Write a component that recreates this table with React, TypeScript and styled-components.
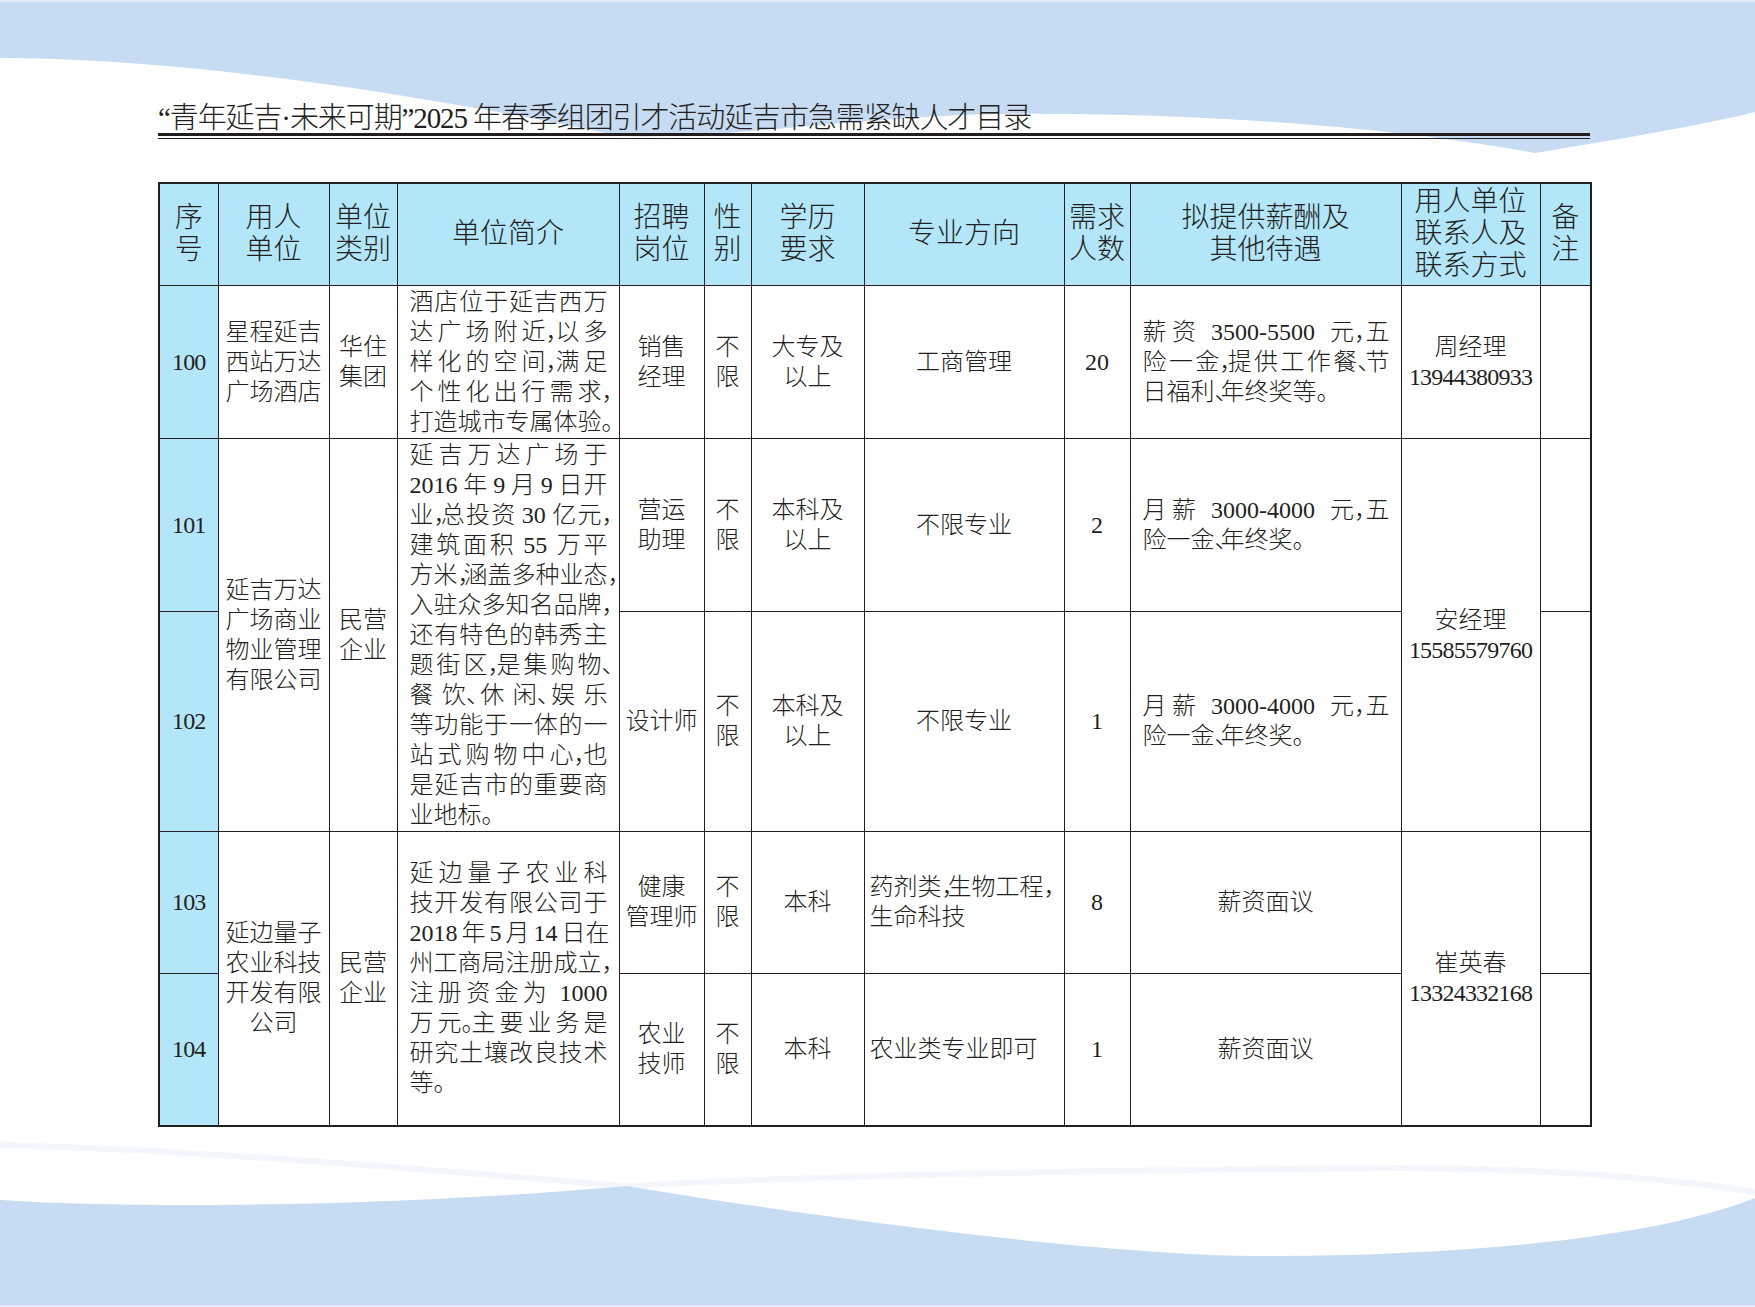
import React from "react";
import styled, { createGlobalStyle } from "styled-components";

const INK = "#231f20";
const SKY = "#c7dcf2";
const HEAD_BG = "#b4e6fa";

const GlobalStyle = createGlobalStyle`
  html, body { margin: 0; padding: 0; background: #fff; }
  body {
    font-family: "Liberation Serif", "Noto Sans CJK SC", serif;
    color: ${INK};
  }
`;

const Page = styled.div`
  position: relative;
  width: 1755px;
  height: 1307px;
  overflow: hidden;
  background: #fff;
`;

const Backdrop = styled.svg`
  position: absolute;
  left: 0;
  top: 0;
  width: 1755px;
  height: 1307px;
  z-index: 0;
`;

const Sheet = styled.main`
  position: relative;
  z-index: 1;
  padding: 104px 165px 0 158px;
`;

const Title = styled.h1`
  margin: 0;
  height: 29px;
  font-family: "Liberation Serif", "Noto Sans CJK SC", serif;
  font-weight: 300;
  font-size: 29px;
  line-height: 29px;
  letter-spacing: -1.1px;
  white-space: nowrap;
  border-bottom: 3px solid ${INK};
`;

const ThinRule = styled.div`
  margin-top: 2px;
  height: 1px;
  background: ${INK};
`;

const Table = styled.table`
  margin-top: 43px;
  width: 1432px;
  table-layout: fixed;
  border-collapse: collapse;
  border: 2px solid ${INK};
`;

const Col = styled.col<{ $w: number }>`
  width: ${(p) => p.$w}px;
`;

const Row = styled.tr<{ $h: number }>`
  height: ${(p) => p.$h}px;
`;

const Head = styled.th`
  border: 1px solid ${INK};
  padding: 0;
  background: ${HEAD_BG};
  font-family: "Liberation Serif", "Noto Sans CJK SC", serif;
  font-weight: 300;
  font-size: 28px;
  line-height: 32px;
  text-align: center;
  vertical-align: middle;
  color: ${INK};
`;

const Cell = styled.td<{ $align?: "center" | "left"; $index?: boolean; $pad?: string }>`
  border: 1px solid ${INK};
  padding: ${(p) => p.$pad ?? "0"};
  background: ${(p) => (p.$index ? HEAD_BG : "#fff")};
  text-align: ${(p) => p.$align ?? "center"};
  vertical-align: middle;
  font-weight: 300;
  font-size: 24px;
  line-height: 30px;
  word-spacing: -2px;
  color: ${INK};
`;

/* a plain line (last line of a paragraph, or a centred label line) */
const Line = styled.span`
  display: block;
  white-space: nowrap;
`;

/* a line spread edge to edge, as the typesetter justified it */
const FillLine = styled.span`
  display: flex;
  justify-content: space-between;
  white-space: nowrap;
`;

const Glyph = styled.span`
  flex: none;
`;

const Space = styled.span`
  flex: none;
  width: 4px;
`;

const Punct = styled.span`
  font-feature-settings: "halt" 1;
  letter-spacing: -6px;
`;

const Num = styled.span`
  letter-spacing: -0.8px;
`;

const PUNCT_CHARS = "，。、";
const PUNCT = /([，。、])/;

function typeset(s: string) {
  return s
    .split(PUNCT)
    .filter((part) => part !== "")
    .map((part, i) =>
      PUNCT.test(part) ? <Punct key={i}>{part}</Punct> : <React.Fragment key={i}>{part}</React.Fragment>
    );
}

type Token = { kind: "text"; body: string; tail: string } | { kind: "space" };

function tokenize(s: string): Token[] {
  const out: Token[] = [];
  let latin = "";
  const flushLatin = () => {
    if (latin) {
      out.push({ kind: "text", body: latin, tail: "" });
      latin = "";
    }
  };
  for (const ch of Array.from(s)) {
    if (ch === " ") {
      flushLatin();
      out.push({ kind: "space" });
    } else if (PUNCT_CHARS.includes(ch)) {
      flushLatin();
      const last = out[out.length - 1];
      if (last && last.kind === "text") last.tail += ch;
      else out.push({ kind: "text", body: "", tail: ch });
    } else if (/[0-9A-Za-z\-.]/.test(ch)) {
      latin += ch;
    } else {
      flushLatin();
      out.push({ kind: "text", body: ch, tail: "" });
    }
  }
  flushLatin();
  return out;
}

function Justified({ text }: { text: string }) {
  return (
    <FillLine>
      {tokenize(text).map((t, i) =>
        t.kind === "space" ? (
          <Space key={i}> </Space>
        ) : (
          <Glyph key={i}>
            {t.body}
            {t.tail && <Punct>{t.tail}</Punct>}
          </Glyph>
        )
      )}
    </FillLine>
  );
}

function Para({ lines, fillLast = false }: { lines: string[]; fillLast?: boolean }) {
  return (
    <>
      {lines.map((l, i) =>
        i < lines.length - 1 || fillLast ? <Justified key={i} text={l} /> : <Line key={i}>{typeset(l)}</Line>
      )}
    </>
  );
}

function Stack({ lines }: { lines: string[] }) {
  return (
    <>
      {lines.map((l, i) => (
        <Line key={i}>{typeset(l)}</Line>
      ))}
    </>
  );
}

const WIDTHS = [59, 111, 68, 222, 85, 47, 113, 200, 66, 271, 139, 51];

const HEADERS: string[][] = [
  ["序", "号"],
  ["用人", "单位"],
  ["单位", "类别"],
  ["单位简介"],
  ["招聘", "岗位"],
  ["性", "别"],
  ["学历", "要求"],
  ["专业方向"],
  ["需求", "人数"],
  ["拟提供薪酬及", "其他待遇"],
  ["用人单位", "联系人及", "联系方式"],
  ["备", "注"],
];

const DESC_PAD = "0 11px 0 12px";
const PAY_PAD = "0 11px 0 12px";
const MAJOR_PAD = "0 4px 0 5px";

export default function App() {
  return (
    <Page>
      <GlobalStyle />
      <Backdrop viewBox="0 0 1755 1307" aria-hidden="true">
        <rect x="0" y="0" width="1755" height="1307" fill="#fff" />
        <path
          d="M0 0 H1755 V112 C1690 128 1600 142 1535 153 C1400 128 1200 112 1000 114 C860 116 720 140 620 136 C450 100 200 58 0 58 Z"
          fill={SKY}
        />
        <rect x="0" y="0" width="1755" height="2" fill="#e3ecf7" />
        <path
          d="M0 1145 C200 1150 430 1170 627 1186 C820 1175 1100 1170 1400 1168 C1550 1168 1680 1180 1755 1192"
          fill="none"
          stroke="#f3f7fc"
          strokeWidth="6"
        />
        <path
          d="M0 1200 C150 1210 420 1205 627 1186 C800 1215 1100 1256 1265 1256 C1450 1256 1650 1240 1755 1198 V1307 H0 Z"
          fill={SKY}
        />
        <rect x="0" y="1305" width="1755" height="2" fill="#e3ecf7" />
      </Backdrop>
      <Sheet>
        <Title>“青年延吉·未来可期”2025 年春季组团引才活动延吉市急需紧缺人才目录</Title>
        <ThinRule />
        <Table>
          <colgroup>
            {WIDTHS.map((w, i) => (
              <Col key={i} $w={w} />
            ))}
          </colgroup>
          <thead>
            <Row $h={102}>
              {HEADERS.map((h, i) => (
                <Head key={i}>
                  <Stack lines={h} />
                </Head>
              ))}
            </Row>
          </thead>
          <tbody>
            <Row $h={153}>
              <Cell $index><Num>100</Num></Cell>
              <Cell><Stack lines={["星程延吉", "西站万达", "广场酒店"]} /></Cell>
              <Cell><Stack lines={["华住", "集团"]} /></Cell>
              <Cell $align="left" $pad={DESC_PAD}>
                <Para
                  fillLast
                  lines={["酒店位于延吉西万", "达广场附近，以多", "样化的空间，满足", "个性化出行需求，", "打造城市专属体验。"]}
                />
              </Cell>
              <Cell><Stack lines={["销售", "经理"]} /></Cell>
              <Cell><Stack lines={["不", "限"]} /></Cell>
              <Cell><Stack lines={["大专及", "以上"]} /></Cell>
              <Cell>工商管理</Cell>
              <Cell>20</Cell>
              <Cell $align="left" $pad={PAY_PAD}>
                <Para lines={["薪资 3500-5500 元，五", "险一金，提供工作餐、节", "日福利、年终奖等。"]} />
              </Cell>
              <Cell><Stack lines={["周经理"]} /><Num>13944380933</Num></Cell>
              <Cell />
            </Row>
            <Row $h={173}>
              <Cell $index><Num>101</Num></Cell>
              <Cell rowSpan={2}><Stack lines={["延吉万达", "广场商业", "物业管理", "有限公司"]} /></Cell>
              <Cell rowSpan={2}><Stack lines={["民营", "企业"]} /></Cell>
              <Cell rowSpan={2} $align="left" $pad={DESC_PAD}>
                <Para
                  lines={[
                    "延吉万达广场于",
                    "2016 年 9 月 9 日开",
                    "业，总投资 30 亿元，",
                    "建筑面积 55 万平",
                    "方米，涵盖多种业态，",
                    "入驻众多知名品牌，",
                    "还有特色的韩秀主",
                    "题街区，是集购物、",
                    "餐饮、休闲、娱乐",
                    "等功能于一体的一",
                    "站式购物中心，也",
                    "是延吉市的重要商",
                    "业地标。",
                  ]}
                />
              </Cell>
              <Cell><Stack lines={["营运", "助理"]} /></Cell>
              <Cell><Stack lines={["不", "限"]} /></Cell>
              <Cell><Stack lines={["本科及", "以上"]} /></Cell>
              <Cell>不限专业</Cell>
              <Cell>2</Cell>
              <Cell $align="left" $pad={PAY_PAD}>
                <Para lines={["月薪 3000-4000 元，五", "险一金、年终奖。"]} />
              </Cell>
              <Cell rowSpan={2}><Stack lines={["安经理"]} /><Num>15585579760</Num></Cell>
              <Cell />
            </Row>
            <Row $h={220}>
              <Cell $index><Num>102</Num></Cell>
              <Cell>设计师</Cell>
              <Cell><Stack lines={["不", "限"]} /></Cell>
              <Cell><Stack lines={["本科及", "以上"]} /></Cell>
              <Cell>不限专业</Cell>
              <Cell>1</Cell>
              <Cell $align="left" $pad={PAY_PAD}>
                <Para lines={["月薪 3000-4000 元，五", "险一金、年终奖。"]} />
              </Cell>
              <Cell />
            </Row>
            <Row $h={142}>
              <Cell $index><Num>103</Num></Cell>
              <Cell rowSpan={2}><Stack lines={["延边量子", "农业科技", "开发有限", "公司"]} /></Cell>
              <Cell rowSpan={2}><Stack lines={["民营", "企业"]} /></Cell>
              <Cell rowSpan={2} $align="left" $pad={DESC_PAD}>
                <Para
                  lines={[
                    "延边量子农业科",
                    "技开发有限公司于",
                    "2018 年 5 月 14 日在",
                    "州工商局注册成立，",
                    "注册资金为 1000",
                    "万元。主要业务是",
                    "研究土壤改良技术",
                    "等。",
                  ]}
                />
              </Cell>
              <Cell><Stack lines={["健康", "管理师"]} /></Cell>
              <Cell><Stack lines={["不", "限"]} /></Cell>
              <Cell>本科</Cell>
              <Cell $align="left" $pad={MAJOR_PAD}><Stack lines={["药剂类，生物工程，", "生命科技"]} /></Cell>
              <Cell>8</Cell>
              <Cell>薪资面议</Cell>
              <Cell rowSpan={2}><Stack lines={["崔英春"]} /><Num>13324332168</Num></Cell>
              <Cell />
            </Row>
            <Row $h={153}>
              <Cell $index><Num>104</Num></Cell>
              <Cell><Stack lines={["农业", "技师"]} /></Cell>
              <Cell><Stack lines={["不", "限"]} /></Cell>
              <Cell>本科</Cell>
              <Cell $align="left" $pad={MAJOR_PAD}>农业类专业即可</Cell>
              <Cell>1</Cell>
              <Cell>薪资面议</Cell>
              <Cell />
            </Row>
          </tbody>
        </Table>
      </Sheet>
    </Page>
  );
}
